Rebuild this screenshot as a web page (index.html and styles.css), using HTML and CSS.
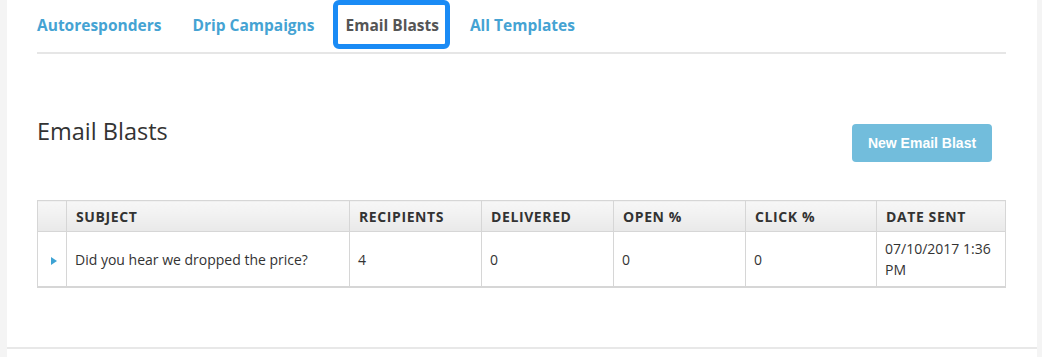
FILE: index.html
```html
<!DOCTYPE html>
<html lang="en">
<head>
    <meta charset="UTF-8">
    <meta name="viewport" content="width=device-width, initial-scale=1.0">
    <title>Email Blasts</title>
    <link rel="stylesheet" href="styles.css">
</head>
<body>

    <div class="page">
        <div class="panel">
            <nav class="tabs">
                <a href="#" class="tab">Autoresponders</a>
                <a href="#" class="tab">Drip Campaigns</a>
                <a href="#" class="tab active">Email Blasts</a>
                <a href="#" class="tab">All Templates</a>
            </nav>

            <div class="section-head">
                <h2>Email Blasts</h2>
                <button type="button" class="btn-new">New Email Blast</button>
            </div>

            <table class="blasts">
                <colgroup>
                    <col class="c-toggle">
                    <col class="c-subject">
                    <col class="c-num">
                    <col class="c-num">
                    <col class="c-num">
                    <col class="c-num2">
                    <col>
                </colgroup>
                <thead>
                    <tr>
                        <th></th>
                        <th>Subject</th>
                        <th>Recipients</th>
                        <th>Delivered</th>
                        <th>Open %</th>
                        <th>Click %</th>
                        <th>Date Sent</th>
                    </tr>
                </thead>
                <tbody>
                    <tr>
                        <td class="toggle"><span class="arrow"></span></td>
                        <td>Did you hear we dropped the price?</td>
                        <td>4</td>
                        <td>0</td>
                        <td>0</td>
                        <td>0</td>
                        <td>07/10/2017 1:36 PM</td>
                    </tr>
                </tbody>
            </table>
        </div>
    </div>

</body>
</html>
```

FILE: styles.css
```css
/* Page */
body {
    margin: 0;
    background: #f4f4f4;
    font-family: 'Open Sans', 'Liberation Sans', sans-serif;
    color: #333;
}

.page {
    margin: 0 5px 0 7px;
    background: #ffffff;
    height: 357px;
}

.panel {
    padding: 0 31px 59px 30px;
    border-bottom: 2px solid #e8e8e8;
}

/* Tabs */
.tabs {
    display: flex;
    gap: 31px;
    padding-top: 5px;
    padding-bottom: 8px;
    border-bottom: 2px solid #e6e6e6;
}

.tab {
    display: block;
    padding-top: 2px;
    line-height: 37px;
    font-size: 15.5px;
    font-weight: 700;
    color: #45a3d3;
    text-decoration: none;
}

.tab.active {
    color: #555;
    padding: 2px 6px 0 8px;
    margin: 0 -6px 0 -8px;
    outline: 5px solid #1a8bf5;
    border-radius: 1px;
}

/* Heading row */
.section-head {
    display: flex;
    justify-content: space-between;
    align-items: flex-start;
    margin-top: 64px;
    padding-right: 14px;
}

h2 {
    margin: 0;
    font-size: 23.5px;
    font-weight: 400;
    line-height: 26px;
    color: #333;
}

.btn-new {
    margin-top: 6px;
    width: 140px;
    height: 38px;
    background: #72bddc;
    color: #fff;
    border: none;
    border-radius: 4px;
    font-family: 'Liberation Sans', Arial, sans-serif;
    font-size: 14px;
    font-weight: 700;
    cursor: pointer;
}

/* Table */
.blasts {
    width: 100%;
    margin-top: 38px;
    border-collapse: collapse;
    table-layout: fixed;
    font-size: 14px;
    border: 1px solid #d6d6d6;
    border-bottom-width: 2px;
}

.c-toggle { width: 29px; }
.c-subject { width: 283px; }
.c-num { width: 132px; }
.c-num2 { width: 131px; }

.blasts th {
    height: 30px;
    padding: 0 9px;
    text-align: left;
    font-weight: 700;
    letter-spacing: 0.6px;
    text-transform: uppercase;
    color: #333;
    background: linear-gradient(to bottom, #f7f7f7, #e9e9e9);
    border: 1px solid #d6d6d6;
}

.blasts td {
    height: 54px;
    padding: 0 8px 0 8px;
    line-height: 21px;
    border: 1px solid #d6d6d6;
    vertical-align: middle;
}

.blasts td.toggle {
    padding: 0 0 0 13px;
}

.arrow {
    display: inline-block;
    width: 0;
    height: 0;
    border-top: 4px solid transparent;
    border-bottom: 4px solid transparent;
    border-left: 6px solid #3ea3d4;
    vertical-align: middle;
}
```
